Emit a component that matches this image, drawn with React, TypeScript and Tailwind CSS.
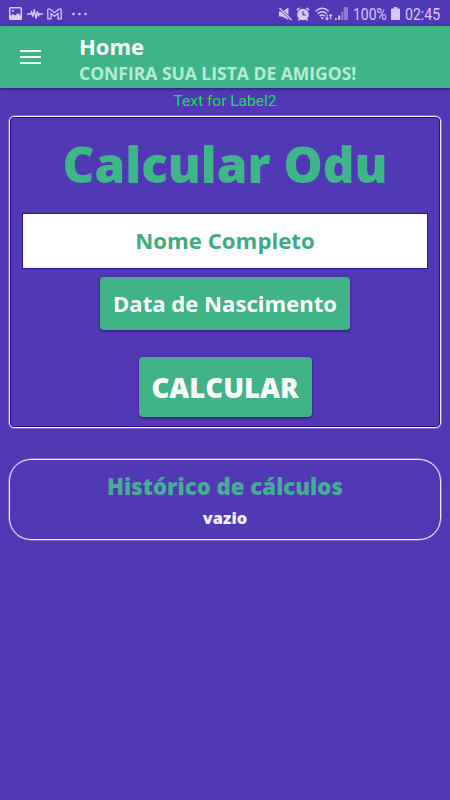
import type React from "react"

export default function App() {
  return (
    <div className="flex min-h-screen w-full flex-col bg-[#5139b6] font-['Open_Sans',sans-serif]">
      <StatusBar />
      <Header title="Home" subtitle="CONFIRA SUA LISTA DE AMIGOS!" />

      <main className="flex flex-col px-[9px]">
        <p className="mt-[3px] text-center font-[Roboto,sans-serif] text-[15.5px] leading-5 text-[#23db5c]">
          Text for Label2
        </p>

        <section className="relative mt-[5px] flex h-[312px] flex-col items-center rounded-[5px] border border-[#f6f2ff] px-[13px] shadow-[inset_0_0_0_1px_#2c078f,0_0_0_0.5px_#a99ade]">
          {/* faint lettering behind the form */}
          <div
            aria-hidden="true"
            className="pointer-events-none absolute inset-x-3 bottom-[4px] flex justify-between text-[104px] leading-[80px] font-extrabold text-[#5038b4]"
          >
            <span className="inline-block origin-left scale-x-[0.62]">No</span>
            <span className="inline-block origin-right scale-x-[0.6]">Odu</span>
          </div>
          <h2 className="mt-[13px] text-[49.3px] leading-[68px] font-extrabold whitespace-nowrap text-[#3fb58a]">
            Calcular Odu
          </h2>
          <input
            type="text"
            placeholder="Nome Completo"
            className="relative mt-[16px] h-[54px] w-full bg-white pb-[2px] text-center text-[22.2px] font-bold text-[#3fb58a] shadow-[0_0_0_1px_#34119a] placeholder:text-[#3fa985] placeholder:opacity-100 focus:outline-none"
          />
          <GreenButton className="mt-[9px] h-[53px] w-[250px] text-[22.1px] font-bold">Data de Nascimento</GreenButton>
          <GreenButton className="mt-[27px] h-[60px] w-[173px] pt-[2px] text-[27.5px] font-extrabold">CALCULAR</GreenButton>
        </section>

        <section className="mt-[31px] flex h-[81px] flex-col items-center rounded-[22px] border border-[#f6f2ff] shadow-[0_0_0_0.5px_#a99ade]">
          <h3 className="mt-[12px] text-[22.2px] leading-[30px] font-extrabold text-[#45ad96]">Histórico de cálculos</h3>
          <p className="mt-[5px] text-[16.4px] leading-[22px] font-extrabold text-[#f3eeff]">vazio</p>
        </section>
      </main>
    </div>
  )
}

function GreenButton({ className, children }: { className: string; children: React.ReactNode }) {
  return (
    <button
      type="button"
      className={[
        "relative flex shrink-0 cursor-pointer items-center justify-center rounded-[4px] bg-[#40b487] whitespace-nowrap text-white shadow-[0_1px_3px_rgba(20,10,80,0.7)]",
        className,
      ].join(" ")}
    >
      {children}
    </button>
  )
}

function Header({ title, subtitle }: { title: string; subtitle: string }) {
  return (
    <header className="flex h-[62px] items-center bg-[#40b487] pl-5 shadow-[0_1px_3px_rgba(20,10,80,0.7)]">
      <button type="button" aria-label="Menu" className="flex w-[21px] cursor-pointer flex-col gap-1">
        <span className="h-[2px] bg-[#ebfff8]" />
        <span className="h-[2px] bg-[#ebfff8]" />
        <span className="h-[2px] bg-[#ebfff8]" />
      </button>
      <div className="ml-[38px] flex flex-col pt-[3px] whitespace-nowrap">
        <h1 className="text-[22px] leading-[28px] font-bold text-white">{title}</h1>
        <p className="text-[17.5px] leading-[26px] font-bold text-[#b4edd6]">{subtitle}</p>
      </div>
    </header>
  )
}

function StatusBar() {
  return (
    <div className="flex h-[26px] items-center justify-between pt-px pr-[10px] pl-[9px] text-[#d6caf8]">
      <div className="flex items-center">
        <svg width="13" height="13" viewBox="0 0 13 13" fill="none" stroke="currentColor">
          <rect x="0.75" y="0.75" width="11.5" height="11.5" rx="0.8" strokeWidth="1.5" />
          <path d="M1 12V9l3-2 2 1.5L9 6l3 3v3z" fill="currentColor" stroke="none" />
          <circle cx="4" cy="4" r="1" fill="currentColor" stroke="none" />
        </svg>
        <svg className="ml-[5px]" width="16" height="12" viewBox="0 0 16 12" fill="none" stroke="currentColor" strokeWidth="1.4">
          <path d="M0 6h3.5l1-2 1.3 4.5L7.3 1.5 9 10.5l1.4-7 1.2 4 .9-1.5H16" />
        </svg>
        <svg className="ml-1" width="15" height="12" viewBox="0 0 15 12" fill="none" stroke="currentColor" strokeWidth="1.3">
          <path d="M.8 10.8V2.2Q.8.8 2 .8 2.6.8 3.2 1.3L7.5 4.7 11.8 1.3Q12.4.8 13 .8 14.2.8 14.2 2.2V10.8H11V5.6L7.5 8.3 4 5.6V10.8z" />
        </svg>
        <svg className="ml-[10px]" width="15" height="4" viewBox="0 0 15 4" fill="currentColor">
          <circle cx="1.5" cy="2" r="1.3" />
          <circle cx="7.5" cy="2" r="1.3" />
          <circle cx="13.5" cy="2" r="1.3" />
        </svg>
      </div>

      <div className="flex items-center">
        <svg width="13" height="14" viewBox="0 0 13 14">
          <path d="M0 4.5h3L9.5.5v12.5L3 9.5H0z" fill="currentColor" />
          <path d="M.5.8 12.5 13" stroke="#5139b6" strokeWidth="2.6" />
          <path d="M.5 1 12.5 13" stroke="currentColor" strokeWidth="1.5" />
        </svg>
        <svg className="ml-1" width="14" height="14" viewBox="0 0 14 14">
          <circle cx="7" cy="7.5" r="5.8" fill="currentColor" />
          <path d="M.8 3.3 3.6.9M13.2 3.3 10.4.9M2.5 13.5l1.5-2M11.5 13.5l-1.5-2" stroke="currentColor" strokeWidth="1.5" />
          <path d="M7 4.3V7.8H9.6" fill="none" stroke="#5139b6" strokeWidth="1.2" />
        </svg>
        <svg className="ml-[5px]" width="18" height="14" viewBox="0 0 18 14" fill="none" stroke="currentColor" strokeWidth="1.4">
          <path d="M.6 4.2Q7.2-1.6 13.8 4.2M2.6 6.8Q7.2 2.8 11.8 6.8M4.6 9.2Q7.2 7 9.8 9.2" />
          <path d="M5.7 10.7Q7.2 9.5 8.7 10.7L7.2 12.6z" fill="currentColor" stroke="none" />
          <path d="M12 7.5v5M10.5 11l1.5 1.6 1.5-1.6M15.7 12.6v-5M14.2 9.1l1.5-1.6 1.5 1.6" strokeWidth="1.1" />
        </svg>
        <svg className="ml-[2px]" width="13" height="13" viewBox="0 0 13 13" fill="currentColor">
          <path d="M0 11h1.8v2H0zM3.2 8.5h2V13h-2z" />
          <path d="M6.2 5h2v8h-2zM8.7 0H13v13H8.7z" opacity="0.45" />
        </svg>
        <span className="ml-[5px] w-[35px] pt-[2px] font-[Roboto,sans-serif] text-[17px] leading-none">
          <span className="inline-block origin-left scale-x-[0.82]">100%</span>
        </span>
        <svg className="ml-[3px]" width="9" height="13" viewBox="0 0 9 13" fill="currentColor">
          <path d="M2.8 0h3.4v1.5H8.2q.8 0 .8.8v9.900q0 .8-.8.8H.8Q0 13 0 12.200V2.300q0-.8.8-.8h2z" />
        </svg>
        <span className="ml-[5px] w-[35px] pt-[2px] font-[Roboto,sans-serif] text-[17px] leading-none">
          <span className="inline-block origin-left scale-x-[0.83]">02:45</span>
        </span>
      </div>
    </div>
  )
}
